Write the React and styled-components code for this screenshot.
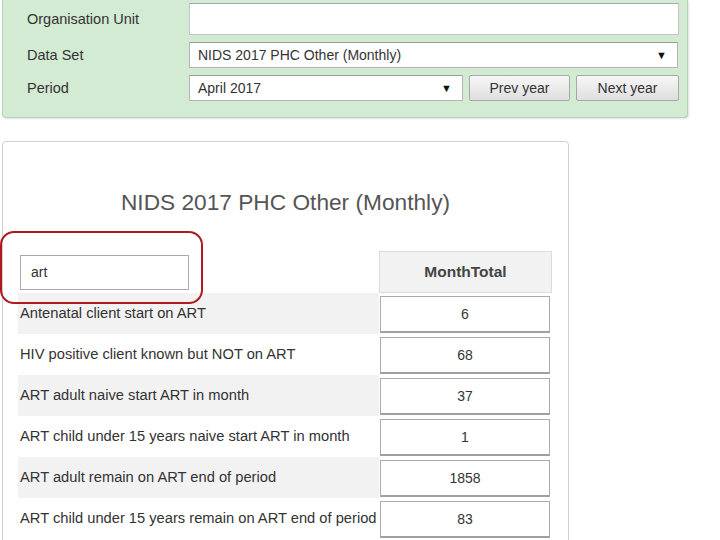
import React from "react";
import styled, { createGlobalStyle } from "styled-components";

const Global = createGlobalStyle`
  html, body { margin: 0; padding: 0; background: #ffffff; }
  body { font-family: "Liberation Sans", Arial, sans-serif; color: #333; }
  * { box-sizing: border-box; }
`;

const Page = styled.div`
  position: relative;
  width: 720px;
  height: 540px;
  overflow: hidden;
`;

const FilterPanel = styled.div`
  margin-left: 2px;
  width: 686px;
  background: #d3ead3;
  border: 1px solid #b7d1b7;
  border-top: none;
  border-radius: 0 0 4px 4px;
  box-shadow: 1px 1px 2px rgba(0, 0, 0, 0.12);
  padding: 3px 8px 16px 24px;
  display: grid;
  grid-template-columns: 162px 490px;
  row-gap: 7px;
  align-items: center;
`;

const Label = styled.div`
  font-size: 14.5px;
  color: #333;
`;

const TextField = styled.div`
  height: 32px;
  background: #fff;
  border: 1px solid #c4c4c4;
  border-top-color: #a8a8a8;
`;

const FieldRow = styled.div`
  display: flex;
  gap: 6px;
`;

const SelectBox = styled.div`
  height: 26px;
  width: ${(p) => p.$width || "489px"};
  background: #fff;
  border: 1px solid #b5b5b5;
  border-top-color: #9c9c9c;
  display: flex;
  align-items: center;
  justify-content: space-between;
  padding: 0 10px 0 8px;
  font-size: 14px;
  color: #333;
`;

const Arrow = styled.span`
  font-size: 11px;
  color: #111;
`;

const YearButton = styled.button`
  height: 26px;
  width: ${(p) => p.$width};
  font-family: "Liberation Sans", Arial, sans-serif;
  font-size: 14px;
  color: #333;
  background: linear-gradient(#f7f7f7, #dedede);
  border: 1px solid #a8a8a8;
  border-radius: 2px;
  padding: 0;
`;

const Card = styled.div`
  margin: 23px 0 0 2px;
  width: 567px;
  height: 500px;
  border: 1px solid #cfcfcf;
  border-radius: 4px;
  padding: 46px 15px 0 15px;
`;

const Title = styled.h2`
  margin: 0 0 35px 0;
  font-size: 22.7px;
  line-height: 28px;
  font-weight: normal;
  color: #555;
  text-align: center;
`;

const DataTable = styled.table`
  border-collapse: separate;
  border-spacing: 0;
  width: 534px;
`;

const SearchCell = styled.td`
  width: 361px;
  height: 42px;
  padding: 0 0 0 2px;
  vertical-align: middle;
`;

const SearchInput = styled.input`
  width: 169px;
  height: 35px;
  border: 1px solid #aaa;
  padding: 0 10px;
  font-family: "Liberation Sans", Arial, sans-serif;
  font-size: 14px;
  color: #333;
  outline: none;
`;

const HeaderCell = styled.th`
  background: #f2f2f2;
  border: 1px solid #dcdcdc;
  font-size: 15.5px;
  font-weight: bold;
  color: #444;
  text-align: center;
  height: 42px;
`;

const LabelCell = styled.td`
  height: 41px;
  padding: 0 0 1px 2px;
  font-size: 14.7px;
  color: #333;
  white-space: nowrap;
  background: ${(p) => (p.$striped ? "#f2f2f2" : "#fff")};
`;

const ValueCell = styled.td`
  padding: 3px 2px 1px 1px;
`;

const ValueInput = styled.input`
  display: block;
  width: 170px;
  height: 37px;
  border: 1px solid #ababab;
  border-bottom: 2px solid #a0a0a0;
  text-align: center;
  font-family: "Liberation Sans", Arial, sans-serif;
  font-size: 14px;
  color: #333;
  outline: none;
`;

const Highlight = styled.div`
  position: absolute;
  left: 0;
  top: 231px;
  width: 203px;
  height: 73px;
  border: 2px solid #b01a1f;
  border-radius: 14px;
  pointer-events: none;
`;

const rows = [
  ["Antenatal client start on ART", "6"],
  ["HIV positive client known but NOT on ART", "68"],
  ["ART adult naive start ART in month", "37"],
  ["ART child under 15 years naive start ART in month", "1"],
  ["ART adult remain on ART end of period", "1858"],
  ["ART child under 15 years remain on ART end of period", "83"],
];

export default function App() {
  return (
    <Page>
      <Global />
      <FilterPanel>
        <Label>Organisation Unit</Label>
        <TextField />
        <Label>Data Set</Label>
        <SelectBox>
          <span>NIDS 2017 PHC Other (Monthly)</span>
          <Arrow>▼</Arrow>
        </SelectBox>
        <Label>Period</Label>
        <FieldRow>
          <SelectBox $width="274px">
            <span>April 2017</span>
            <Arrow>▼</Arrow>
          </SelectBox>
          <YearButton $width="101px">Prev year</YearButton>
          <YearButton $width="103px">Next year</YearButton>
        </FieldRow>
      </FilterPanel>
      <Card>
        <Title>NIDS 2017 PHC Other (Monthly)</Title>
        <DataTable>
          <thead>
            <tr>
              <SearchCell>
                <SearchInput defaultValue="art" />
              </SearchCell>
              <HeaderCell>MonthTotal</HeaderCell>
            </tr>
          </thead>
          <tbody>
            {rows.map(([label, value], i) => (
              <tr key={label}>
                <LabelCell $striped={i % 2 === 0}>{label}</LabelCell>
                <ValueCell>
                  <ValueInput defaultValue={value} />
                </ValueCell>
              </tr>
            ))}
          </tbody>
        </DataTable>
      </Card>
      <Highlight />
    </Page>
  );
}
